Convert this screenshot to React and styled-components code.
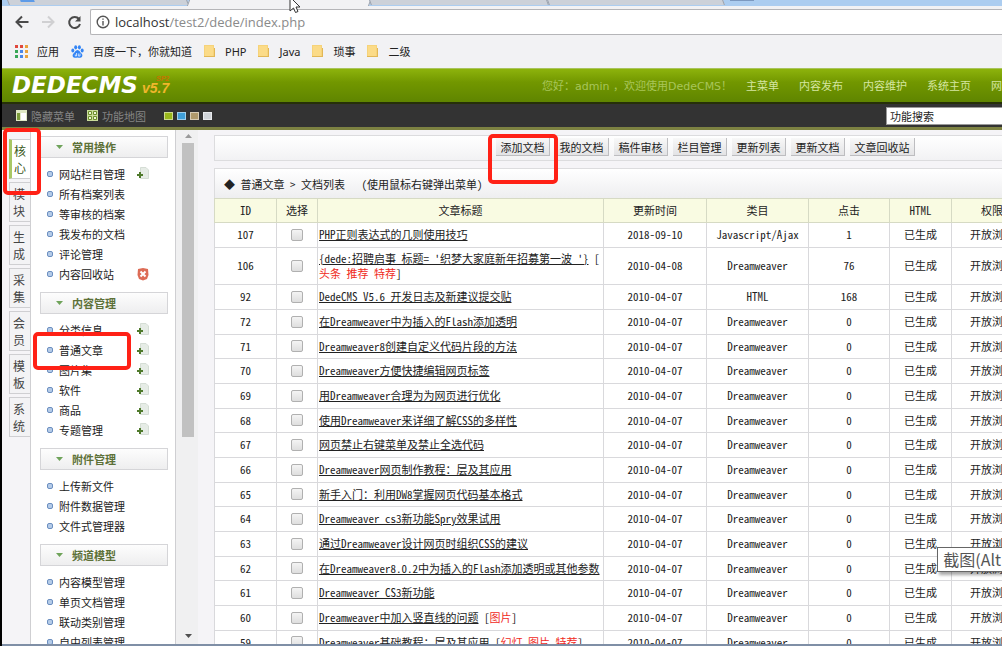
import React from 'react';
import styled, { createGlobalStyle } from 'styled-components';

const SONG = "'Noto Sans CJK SC', sans-serif";
const UI = "'DejaVu Sans', 'Noto Sans CJK SC', sans-serif";

const GlobalStyle = createGlobalStyle`
  * {
    box-sizing: border-box;
  }

  body {
    margin: 0;
    overflow: hidden;
    background: #f5f4f7;
    font-family: ${SONG};
    font-size: 11px;
    color: #222;
  }

  button, input {
    font: inherit;
    color: inherit;
  }

  a {
    color: inherit;
    text-decoration: none;
  }
`;

const Screen = styled.div`
  position: relative;
  display: flex;
  flex-direction: column;
  height: 100vh;
  overflow: hidden;
  border-left: 2px solid #000;
`;

/* browser chrome */

const TabStrip = styled.div`
  display: flex;
  flex: none;
  height: 6px;
  padding-left: 6px;
  background: #accdf0;
`;

const BrowserTab = styled.div`
  flex: none;
  width: ${(p) => p.$width}px;
  height: ${(p) => (p.$active ? 6 : 5)}px;
  padding-left: 12px;
  background: ${(p) => (p.$active ? '#f2f2f4' : '#ccd1d9')};
  border-left: 1px solid #9aa1ad;
  border-right: 1px solid #9aa1ad;
  transform: skewX(${(p) => (p.$active ? -20 : 20)}deg);
`;

const Favicon = styled.div`
  width: 14px;
  height: 2px;
  background: #5d9be8;
`;

const NextFavicon = styled(Favicon)`
  width: 24px;
  height: 1px;
  margin-left: 6px;
  background: #7c99c0;
`;

const AddressBar = styled.div`
  display: flex;
  flex: none;
  align-items: center;
  height: 32px;
  padding-left: 7px;
  background: #f2f2f4;
`;

const NavButton = styled.button`
  display: flex;
  align-items: center;
  justify-content: center;
  width: 26px;
  height: 24px;
  padding: 0;
  border: none;
  background: none;
`;

const UrlBox = styled.label`
  display: flex;
  flex: 1;
  align-items: center;
  gap: 5px;
  height: 26px;
  margin-left: 3px;
  padding-left: 5px;
  background: #fff;
  border: 1px solid #b5b5b8;
  border-right: none;
  border-radius: 2px 0 0 2px;
`;

const Url = styled.span`
  font-family: 'Open Sans', sans-serif;
  font-size: 13px;
  color: #8a8a8a;

  b {
    font-weight: normal;
    color: #333;
  }
`;

const Bookmarks = styled.nav`
  display: flex;
  flex: none;
  align-items: center;
  height: 30px;
  padding: 0 0 4px 13px;
  background: #f2f2f4;
  font-family: 'Noto Sans', 'Noto Sans CJK SC', sans-serif;
`;

const Bookmark = styled.a`
  display: flex;
  align-items: center;
  gap: 9px;
  margin-right: 12px;
  white-space: nowrap;
`;

/* CMS header */

const Header = styled.header`
  display: flex;
  flex: none;
  align-items: center;
  height: 34px;
  padding: 0 0 2px 10px;
  background: linear-gradient(#8db30c, #729700 40%, #5f8500);
  border-top: 1px solid #a9c45b;
  white-space: nowrap;
`;

const Logo = styled.div`
  display: flex;
  align-items: center;
  width: 530px;
  flex: none;
  font-family: 'DejaVu Sans', sans-serif;
  font-size: 23px;
  font-style: italic;
  font-weight: bold;
  line-height: 24px;
  color: #fff;
`;

const Version = styled.span`
  display: flex;
  flex-direction: column;
  margin-left: 4px;
  font-family: 'Liberation Sans', sans-serif;
  font-size: 14px;
  line-height: 12px;
  color: #f0b62c;

  sup {
    align-self: flex-end;
    font-size: 7px;
    line-height: 7px;
    color: #c87400;
  }
`;

const Greeting = styled.span`
  width: 204px;
  flex: none;
  font-family: ${UI};
  color: #a8c55a;
`;

const TopLink = styled.a`
  margin-right: 20px;
  color: #d5e6a0;
`;

const DarkBar = styled.div`
  display: flex;
  flex: none;
  align-items: center;
  height: 28px;
  padding-left: 14px;
  background: #333;
  border-top: 2px solid #263008;
  border-bottom: 3px solid #7d8242;
  color: #858585;
  white-space: nowrap;
`;

const BarLink = styled.a`
  display: flex;
  align-items: center;
  gap: 4px;
  margin-right: 12px;
`;

const Skins = styled.div`
  display: flex;
  flex: 1;
  gap: 4px;
  margin-left: 6px;
`;

const Skin = styled.button`
  width: 9px;
  height: 8px;
  padding: 0;
  border: 1px solid rgba(255, 255, 255, 0.5);
  background: ${(p) => p.$color};
`;

const Search = styled.input`
  width: 116px;
  height: 18px;
  flex: none;
  padding: 0 3px;
  background: #fff;
  border: 1px solid #999;
  border-right: none;
  border-radius: 0;
  outline: none;
  color: #222;
`;

/* body */

const Body = styled.div`
  display: flex;
  flex: 1;
  min-height: 0;
  overflow: hidden;
  background: #f5f4f7;
`;

const ModuleTabs = styled.nav`
  display: flex;
  flex: none;
  flex-direction: column;
  gap: 3px;
  width: 28px;
  padding: 9px 0 0 7px;
`;

const ModuleTab = styled.a`
  display: flex;
  flex-direction: column;
  align-items: center;
  height: 40px;
  padding: 2px 2px 3px 0;
  font-size: 12px;
  line-height: 17px;
  color: ${(p) => (p.$active ? '#3c5a1c' : '#444')};
  background: ${(p) => (p.$active ? '#fff' : '#f3f3f5')};
  border: 1px solid #cfcfd2;
  border-right: none;
  border-left: ${(p) => (p.$active ? '3px solid #a9c765' : '1px solid #cfcfd2')};
`;

const Menu = styled.aside`
  flex: none;
  width: 146px;
  padding: 6px 7px 0 9px;
  background: #fff;
  border-left: 1px solid #cfcfd2;
  border-right: 1px solid #cfcfd2;
`;

const MenuHead = styled.button`
  display: flex;
  align-items: center;
  gap: 9px;
  width: 100%;
  height: 22px;
  padding: 0 0 0 15px;
  border: 1px solid #d5d5d8;
  background: linear-gradient(#fdfdfd, #eeeeef);
  font-weight: bold;
  color: #5d7138;
`;

const MenuList = styled.ul`
  margin: 0;
  padding: 6px 0 8px 7px;
  list-style: none;
`;

const MenuItem = styled.li`
  display: flex;
  align-items: center;
  height: 20px;
`;

const Bullet = styled.span`
  width: 6px;
  height: 6px;
  margin-right: 6px;
  border: 1px solid #6c8fc0;
  border-radius: 2px;
  background: #b4cbe8;
`;

const MenuLink = styled.a`
  width: 78px;
  white-space: nowrap;
`;

const ScrollBar = styled.div`
  display: flex;
  flex: none;
  flex-direction: column;
  align-items: center;
  justify-content: space-between;
  width: 22px;
  padding: 4px 0 6px 2px;
  background: #f0f0f1;
`;

const Thumb = styled.div`
  width: 12px;
  height: 294px;
  margin: 5px 0 auto;
  background: #c1c1c1;
`;

const Main = styled.main`
  flex: none;
  width: calc(100% + 4px);
  padding: 5px 0 0 16px;
`;

const ToolBar = styled.div`
  display: flex;
  align-items: center;
  justify-content: center;
  gap: 5px;
  height: 26px;
  padding: 0 6px 2px 0;
  background: linear-gradient(#fff, #f2f2f4);
  border: 1px solid #dcdcde;
`;

const ToolButton = styled.button`
  height: 18px;
  padding: 0 4px 0 5px;
  line-height: 16px;
  white-space: nowrap;
  background: linear-gradient(#f8f8f8, #e3e3e5);
  border: solid #bdbdc0;
  border-width: 0 1px 1px 0;
`;

const Crumbs = styled.h1`
  display: flex;
  align-items: center;
  height: 30px;
  margin: 7px 0 0;
  padding-left: 9px;
  font-size: 11px;
  font-weight: normal;
  font-feature-settings: 'hwid';
  white-space: pre;
  background: linear-gradient(#fff, #eeeef0);
  border: 1px solid #dcdcde;
  border-bottom: none;
`;

const DocTable = styled.table`
  width: 100%;
  table-layout: fixed;
  border-collapse: collapse;
  background: #fff;
  font-feature-settings: 'hwid';
  line-height: 15px;
`;

const Th = styled.th`
  width: ${(p) => (p.$width ? `${p.$width}px` : 'auto')};
  height: 24px;
  padding: 0;
  font-weight: normal;
  background: #f9fbe2;
  border: 1px solid #d6dac4;
`;

const Row = styled.tr`
  height: ${(p) => p.$height}px;
`;

const Td = styled.td`
  padding: 0 1px 1px;
  text-align: ${(p) => (p.$left ? 'left' : 'center')};
  border: 1px solid #d9d9dc;
`;

const DocLink = styled.a`
  text-decoration: underline;
`;

const Flag = styled.span`
  color: #f02a1c;
`;

const Check = styled.input`
  display: block;
  appearance: none;
  width: 12px;
  height: 12px;
  margin: 0 auto;
  border: 1px solid #b0b0b0;
  border-radius: 2px;
  background: linear-gradient(#f4f4f4, #dedede);
`;

const StatusEdge = styled.div`
  flex: none;
  height: 2px;
  background: #7f8fa6;
`;

/* things drawn over the page */

const Highlight = styled.div`
  position: absolute;
  left: ${(p) => p.$x}px;
  top: ${(p) => p.$y}px;
  width: ${(p) => p.$w}px;
  height: ${(p) => p.$h}px;
  border: 4px solid #ff2116;
  border-radius: 5px;
  pointer-events: none;
`;

const Tip = styled.div`
  position: absolute;
  right: 0;
  top: 547px;
  height: 25px;
  padding: 0 1px 0 5px;
  font-size: 16px;
  line-height: 22px;
  color: #555;
  background: #fff;
  border: 1px solid #666;
  border-right: none;
  box-shadow: 2px 3px 3px rgba(0, 0, 0, 0.35);
`;

const Pointer = styled.svg`
  position: absolute;
  left: 285px;
  top: -4px;
`;

const BackIcon = () => (
  <svg width="14" height="14" viewBox="0 0 14 14" fill="none" stroke="#4a4a4a" strokeWidth="2">
    <path d="M13.500 7H2M7 1.500 1.500 7 7 12.500" />
  </svg>
);

const ForwardIcon = () => (
  <svg width="14" height="14" viewBox="0 0 14 14" fill="none" stroke="#d0d0d2" strokeWidth="2">
    <path d="M1 7h11M7 1.500 12.500 7 7 12.500" />
  </svg>
);

const ReloadIcon = () => (
  <svg width="15" height="15" viewBox="0 0 15 15" fill="none" stroke="#4a4a4a" strokeWidth="2">
    <path d="M12 4A5.500 5.500 0 1 0 13 9" />
    <path d="M13.500 1v5.500H8z" fill="#4a4a4a" stroke="none" />
  </svg>
);

const InfoIcon = () => (
  <svg width="14" height="14" viewBox="0 0 14 14" fill="none" stroke="#555" strokeWidth="1.4">
    <circle cx="7" cy="7" r="5.8" />
    <path d="M7 6v4.400M7 3.400v1.400" />
  </svg>
);

const APP_COLORS = ['#e0483c', '#e0483c', '#e9a23b', '#3aa757', '#4a86e8', '#e9a23b', '#3aa757', '#4a86e8', '#e9a23b'];

const AppsIcon = () => (
  <svg width="13" height="13" viewBox="0 0 13 13">
    {APP_COLORS.map((c, i) => (
      <rect key={i} x={(i % 3) * 5} y={Math.floor(i / 3) * 5} width="3" height="3" fill={c} />
    ))}
  </svg>
);

const PawIcon = () => (
  <svg width="13" height="13" viewBox="0 0 13 13" fill="#3385f5">
    <ellipse cx="1.8" cy="5.6" rx="1.5" ry="2" />
    <ellipse cx="4.7" cy="2.3" rx="1.5" ry="2.1" />
    <ellipse cx="8.4" cy="2.3" rx="1.5" ry="2.1" />
    <ellipse cx="11.2" cy="5.6" rx="1.5" ry="2" />
    <path d="M6.5 5C8.5 5 9 7.300 10.500 8.500 12 10 11.500 12.600 9.300 12.700 8 12.800 7.500 12.400 6.500 12.400S5 12.800 3.700 12.700C1.500 12.600 1 10 2.500 8.500 4 7.300 4.500 5 6.500 5Z" />
    <path d="M5.500 8v3H4.300V9.500M7.300 8.500V11H9V8.500" fill="none" stroke="#e8f1ff" strokeWidth=".8" />
  </svg>
);

const FolderIcon = () => (
  <svg width="12" height="14" viewBox="0 0 12 14">
    <path d="M0 1h10v3h1v9H0z" fill="#f6d37a" />
    <path d="M0 12h11v1H0zM10 4h1v9h-1z" fill="#e2b756" />
    <path d="M1 2h8v10H1z" fill="#fbdb88" />
  </svg>
);

const HideIcon = () => (
  <svg width="11" height="11" viewBox="0 0 11 11">
    <path d="M0 0h11v11H0z" fill="#dfe8c4" />
    <path d="M1 3h3v7H1z" fill="#7b9b3a" />
    <path d="M5 3h5v7H5z" fill="#fff" />
  </svg>
);

const MapIcon = () => (
  <svg width="11" height="11" viewBox="0 0 11 11">
    <path d="M0 0h11v11H0z" fill="#c9dc9a" />
    <path d="M1.500 1.500h3v3h-3zM6.500 1.500h3v3h-3zM1.500 6.500h3v3h-3zM6.500 6.500h3v3h-3z" fill="#eef5d8" stroke="#6c8f2b" />
  </svg>
);

const CaretIcon = () => (
  <svg width="7" height="4" viewBox="0 0 7 4">
    <path d="M0 0h7L3.500 4z" fill="#6fa35a" />
  </svg>
);

const ArrowIcon = ({ up }) => (
  <svg width="7" height="4" viewBox="0 0 7 4">
    <path d={up ? 'M0 4h7L3.500 0z' : 'M0 0h7L3.500 4z'} fill={up ? '#9a9a9a' : '#505050'} />
  </svg>
);

const AddIcon = () => (
  <svg width="12" height="14" viewBox="0 0 12 14">
    <path d="M3.500.5h5.500l2.500 2.500v8.500h-8z" fill="#e6ece6" stroke="#d5ddd5" />
    <path d="M0 7h2V5h2v2h2v2H4v2H2V9H0z" fill="#4f7a2c" />
  </svg>
);

const RecycleIcon = () => (
  <svg width="12" height="13" viewBox="0 0 12 13">
    <path d="M1 1 6 0l5 1 .5 6-1.500 4L6 12.500 2 11 .5 7z" fill="#dd6c56" />
    <path d="m3.500 3.500 5 5m0-5-5 5" stroke="#fff" strokeWidth="2" />
  </svg>
);

const BOOKMARKS = ['PHP', 'Java', '琐事', '二级'];
const TOP_LINKS = ['主菜单', '内容发布', '内容维护', '系统主页', '网站主页'];
const SKINS = ['#9ab81c', '#3f9fd8', '#b09a6c', '#d0d4d8'];
const MODULES = ['核心', '模块', '生成', '采集', '会员', '模板', '系统'];
const TOOLS = ['添加文档', '我的文档', '稿件审核', '栏目管理', '更新列表', '更新文档', '文章回收站'];

const MENU = [
  {
    title: '常用操作',
    items: [['网站栏目管理', 'add'], ['所有档案列表'], ['等审核的档案'], ['我发布的文档'], ['评论管理'], ['内容回收站', 'recycle']],
  },
  {
    title: '内容管理',
    items: [['分类信息', 'add'], ['普通文章', 'add'], ['图片集', 'add'], ['软件', 'add'], ['商品', 'add'], ['专题管理', 'add']],
  },
  { title: '附件管理', items: [['上传新文件'], ['附件数据管理'], ['文件式管理器']] },
  { title: '频道模型', items: [['内容模型管理'], ['单页文档管理'], ['联动类别管理'], ['自由列表管理']] },
];

const COLUMNS = [
  ['ID', 62],
  ['选择', 41],
  ['文章标题', 286],
  ['更新时间', 103],
  ['类目', 102],
  ['点击', 81],
  ['HTML', 62],
  ['权限', 81],
  ['', 0],
];

const DOCS = [
  { id: 107, title: 'PHP正则表达式的几则使用技巧', date: '2018-09-10', type: 'Javascript/Ajax', hits: 1 },
  { id: 106, title: "{dede:招聘启事 标题= '织梦大家庭新年招募第一波 '}", flags: '头条 推荐 特荐', date: '2010-04-08', hits: 76 },
  { id: 92, title: 'DedeCMS V5.6 开发日志及新建议提交贴', type: 'HTML', hits: 168 },
  { id: 72, title: '在Dreamweaver中为插入的Flash添加透明' },
  { id: 71, title: 'Dreamweaver8创建自定义代码片段的方法' },
  { id: 70, title: 'Dreamweaver方便快捷编辑网页标签' },
  { id: 69, title: '用Dreamweaver合理为为网页进行优化' },
  { id: 68, title: '使用Dreamweaver来详细了解CSS的多样性' },
  { id: 67, title: '网页禁止右键菜单及禁止全选代码' },
  { id: 66, title: 'Dreamweaver网页制作教程：层及其应用' },
  { id: 65, title: '新手入门：利用DW8掌握网页代码基本格式' },
  { id: 64, title: 'Dreamweaver cs3新功能Spry效果试用' },
  { id: 63, title: '通过Dreamweaver设计网页时组织CSS的建议' },
  { id: 62, title: '在Dreamweaver8.0.2中为插入的Flash添加透明或其他参数' },
  { id: 61, title: 'Dreamweaver CS3新功能' },
  { id: 60, title: 'Dreamweaver中加入竖直线的问题', flags: '图片' },
  { id: 59, title: 'Dreamweaver基础教程：层及其应用', flags: '幻灯 图片 特荐' },
];

const rowHeight = (doc, i) => {
  if (doc.id === 106) return 37;
  return i % 3 === 1 ? 24 : 25;
};

export default function App() {
  return (
    <Screen>
      <GlobalStyle />
      <TabStrip>
        <BrowserTab $width={180}><Favicon /></BrowserTab>
        <BrowserTab $width={182} $active />
        <BrowserTab $width={178} />
        <BrowserTab $width={176} />
        <NextFavicon />
      </TabStrip>
      <AddressBar>
        <NavButton aria-label="Back"><BackIcon /></NavButton>
        <NavButton aria-label="Forward"><ForwardIcon /></NavButton>
        <NavButton aria-label="Reload"><ReloadIcon /></NavButton>
        <UrlBox>
          <InfoIcon />
          <Url><b>localhost</b>/test2/dede/index.php</Url>
        </UrlBox>
      </AddressBar>
      <Bookmarks>
        <Bookmark href="#"><AppsIcon />应用</Bookmark>
        <Bookmark href="#"><PawIcon />百度一下，你就知道</Bookmark>
        {BOOKMARKS.map((name) => (
          <Bookmark key={name} href="#"><FolderIcon />{name}</Bookmark>
        ))}
      </Bookmarks>

      <Header>
        <Logo>
          DEDECMS
          <Version><sup>SP2</sup>v5.7</Version>
        </Logo>
        <Greeting>您好：admin ，欢迎使用DedeCMS！</Greeting>
        {TOP_LINKS.map((name) => (
          <TopLink key={name} href="#">{name}</TopLink>
        ))}
      </Header>
      <DarkBar>
        <BarLink href="#"><HideIcon />隐藏菜单</BarLink>
        <BarLink href="#"><MapIcon />功能地图</BarLink>
        <Skins>
          {SKINS.map((c) => (
            <Skin key={c} $color={c} aria-label="Skin" />
          ))}
        </Skins>
        <Search aria-label="功能搜索" defaultValue="功能搜索" />
      </DarkBar>

      <Body>
        <ModuleTabs>
          {MODULES.map((name, i) => (
            <ModuleTab key={name} href="#" $active={i === 0}>
              <span>{name[0]}</span>
              <span>{name[1]}</span>
            </ModuleTab>
          ))}
        </ModuleTabs>
        <Menu>
          {MENU.map((group) => (
            <section key={group.title}>
              <MenuHead><CaretIcon />{group.title}</MenuHead>
              <MenuList>
                {group.items.map(([name, icon]) => (
                  <MenuItem key={name}>
                    <Bullet />
                    <MenuLink href="#">{name}</MenuLink>
                    {icon === 'add' && <AddIcon />}
                    {icon === 'recycle' && <RecycleIcon />}
                  </MenuItem>
                ))}
              </MenuList>
            </section>
          ))}
        </Menu>
        <ScrollBar>
          <ArrowIcon up />
          <Thumb />
          <ArrowIcon />
        </ScrollBar>
        <Main>
          <ToolBar>
            {TOOLS.map((name) => (
              <ToolButton key={name}>{name}</ToolButton>
            ))}
          </ToolBar>
          <Crumbs>◆ 普通文章 &gt; 文档列表   （使用鼠标右键弹出菜单）</Crumbs>
          <DocTable>
            <thead>
              <tr>
                {COLUMNS.map(([name, width]) => (
                  <Th key={name} $width={width}>{name}</Th>
                ))}
              </tr>
            </thead>
            <tbody>
              {DOCS.map((doc, i) => (
                <Row key={doc.id} $height={rowHeight(doc, i)}>
                  <Td>{doc.id}</Td>
                  <Td><Check type="checkbox" aria-label={doc.title} /></Td>
                  <Td $left>
                    <DocLink href="#">{doc.title}</DocLink>
                    {doc.flags && <> [<wbr /><Flag>{doc.flags}</Flag>]</>}
                  </Td>
                  <Td>{doc.date || '2010-04-07'}</Td>
                  <Td>{doc.type || 'Dreamweaver'}</Td>
                  <Td>{doc.hits || 0}</Td>
                  <Td>已生成</Td>
                  <Td>开放浏览</Td>
                  <Td />
                </Row>
              ))}
            </tbody>
          </DocTable>
        </Main>
      </Body>
      <StatusEdge />

      <Highlight $x={1} $y={128} $w={38} $h={67} />
      <Highlight $x={31} $y={332} $w={98} $h={38} />
      <Highlight $x={486} $y={134} $w={70} $h={50} />
      <Tip>截图(Alt</Tip>
      <Pointer width="16" height="20" viewBox="0 0 16 20">
        <path d="M3 1v14l3.500-3 2 4.500 2.500-1-2-4.500H13z" fill="#fff" stroke="#333" />
      </Pointer>
    </Screen>
  );
}
